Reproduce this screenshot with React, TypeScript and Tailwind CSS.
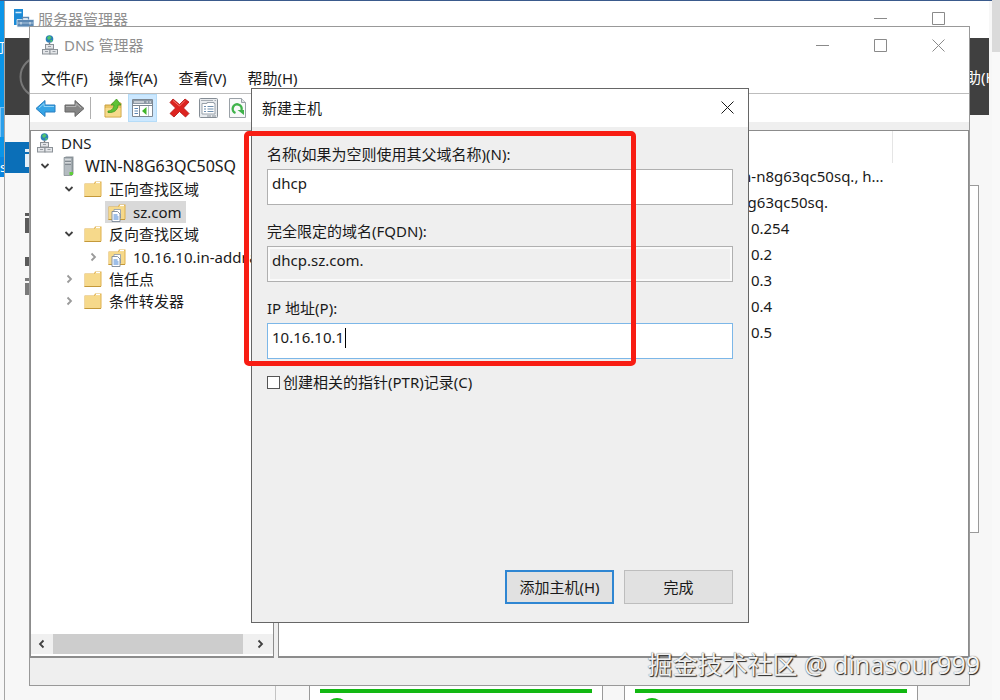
import { useState } from "react";
import type { ReactNode } from "react";
import clsx from "clsx";

const menus = ["文件(F)", "操作(A)", "查看(V)", "帮助(H)"];

const records = [
  "[2], win-n8g63qc50sq., h...",
  "win-n8g63qc50sq.",
  "10.16.10.254",
  "10.16.10.2",
  "10.16.10.3",
  "10.16.10.4",
  "10.16.10.5",
];

type IconProps = { className?: string };

function DnsIcon({ className }: IconProps) {
  return (
    <svg className={className} width="16" height="20" viewBox="0 0 16 20">
      <circle cx="7.5" cy="4" r="3.8" fill="#2b7fb8" />
      <path d="M5 2.5 7.5.6l2 1.8L8 4.4l-2 .3zM8 5.5l2-.8.6 1L9 7.4z" fill="#4fc46c" />
      <path d="M7.5 7.5V10" stroke="#777" strokeWidth="1.4" />
      <g fill="#e3e5e8" stroke="#8b9197">
        <rect x="3.5" y="9.5" width="8" height="4.5" />
        <rect x=".5" y="14.5" width="7.5" height="4.5" />
        <rect x="8" y="14.5" width="7.5" height="4.5" />
      </g>
      <path d="M6 11.5h3M3 16.5h3M10.5 16.5h3" stroke="#9aa0a6" />
    </svg>
  );
}

function ServerIcon() {
  return (
    <svg width="12" height="20" viewBox="0 0 12 20">
      <path d="M1 1.5 3 .5h7.5V18l-2 1.5H1z" fill="#8f979d" />
      <path d="M1 1.5h8v18H1z" fill="#b4bbc0" stroke="#7d868c" strokeWidth=".6" />
      <path d="M2 4h6M2 7h6" stroke="#f1f3f4" strokeWidth="1.2" />
      <path d="M2 5.2h6M2 8.2h6" stroke="#59636a" strokeWidth=".8" />
      <rect x="6.5" y="16" width="3.5" height="3" fill="#5fce3a" />
    </svg>
  );
}

function FolderIcon({ page = false }: { page?: boolean }) {
  return (
    <svg width="19" height="19" viewBox="0 0 19 19">
      <path d="M.5 3.5H10l1-2h6.5V16l-1 1H.5z" fill="#dfb04d" />
      <path d="M1 4h9.500l1-1.500h5V16H1z" fill="#f6d98b" />
      <path d="M12 2.500h4" stroke="#fff" strokeWidth="1.2" />
      <path d="M.5 16.500h16.500" stroke="#c4993a" />
      {page && (
        <>
          <path d="M6 6.5h6.5V15H6z" fill="#fff" stroke="#8a98a8" strokeWidth=".8" />
          <path d="M4 8.5h5.5L12 11v7.5H4z" fill="#fff" stroke="#7a8899" strokeWidth=".9" />
          <path d="M5.5 12h4M5.5 14h5M5.5 16h5" stroke="#3f7fd0" strokeWidth="1.1" />
        </>
      )}
    </svg>
  );
}

function Chevron({ dir, dark = false }: { dir: "down" | "right" | "left"; dark?: boolean }) {
  const d = { down: "M1.5 3 5 6.5 8.5 3", right: "M3.5 1.5 7 5 3.5 8.5", left: "M6.5 1.5 3 5l3.5 3.5" }[dir];
  return (
    <svg width="10" height="10" viewBox="0 0 10 10" fill="none">
      <path d={d} stroke={dark ? "#404040" : "#9a9a9a"} strokeWidth="1.8" />
    </svg>
  );
}

function CaptionGlyph({ kind }: { kind: "min" | "max" | "close" }) {
  const d = { min: "M0 6.5h13", max: "M.5.5h12v12H.5z", close: "M.5.5l12 12m0-12-12 12" }[kind];
  return (
    <svg width="13" height="13" viewBox="0 0 13 13" fill="none" stroke="currentColor">
      <path d={d} />
    </svg>
  );
}

function CaptionButton({ kind, label }: { kind: "min" | "max" | "close"; label: string }) {
  return (
    <button aria-label={label} className="flex w-[58px] items-center justify-center text-[#8a8a8a]">
      <CaptionGlyph kind={kind} />
    </button>
  );
}

function ArrowIcon({ back = false }: { back?: boolean }) {
  return (
    <svg width="21" height="19" viewBox="0 0 21 19">
      <path
        d={back ? "M1 9.5 10 1.5V6h10v7H10v4.5z" : "M20 9.5l-9-8V6H1v7h10v4.5z"}
        fill={back ? "#35a4e6" : "#858585"}
        stroke={back ? "#2b7fc0" : "#666"}
        strokeLinejoin="round"
      />
      <path d={back ? "M4 9l5-4.500v3h10" : "M2 7.500h10v-3L17 9"} fill="none" stroke={back ? "#8fd3f7" : "#b5b5b5"} />
    </svg>
  );
}

function UpFolderIcon() {
  return (
    <svg width="21" height="21" viewBox="0 0 21 21">
      <path d="M2 7h6l1.5-2H18v14H2z" fill="#e9c465" stroke="#c99f3e" />
      <path d="M2.5 10h15v8.5h-15z" fill="#f6da8c" />
      <path d="M5 13c3 0 5.500-2 6-6H8l5.500-6L18 7h-3c0 5-4 8-10 7.500z" fill="#5fc236" stroke="#3f9a1e" strokeWidth=".8" />
    </svg>
  );
}

function PaneIcon() {
  return (
    <svg width="21" height="18" viewBox="0 0 21 18">
      <path d="M.5.5h20v17H.5z" fill="#fff" stroke="#7c8792" />
      <path d="M1 1h19v4H1z" fill="#8d99a5" />
      <path d="M2 3h10M14.5 3H16M17.5 3H19" stroke="#fff" />
      <path d="M1 6.5h19M7.5 7v10" stroke="#7c8792" />
      <path d="M2.5 9.5H6M2.5 12H6M2.5 14.5H6" stroke="#5d87b5" strokeWidth="1.2" />
      <path d="M14.500 8v8L10 12z" fill="#41b52b" />
      <path d="M16.5 7v10" stroke="#b7c0c8" />
    </svg>
  );
}

function DeleteIcon() {
  return (
    <svg width="21" height="20" viewBox="0 0 21 20">
      <path
        d="M4 1l6.500 5.500L16 1l4 3-5.500 6 5.500 5.500-3.500 3.500-6-5.500L5 19l-4-3.500L6.500 10 1 4.500z"
        fill="#dd2420"
        stroke="#b3120f"
        strokeWidth=".8"
      />
      <path d="M4 2.500 10.500 8 16 2.500" stroke="#f47a70" fill="none" />
    </svg>
  );
}

function PropertiesIcon() {
  return (
    <svg width="19" height="20" viewBox="0 0 19 20">
      <rect x=".5" y=".5" width="18" height="19" rx="1" fill="#e8ebee" stroke="#858d95" />
      <path d="M2 2.5h12M15.5 2.5H17" stroke="#a6adb4" />
      <path d="M3 5.500h5v-1h7v1h1V16H3z" fill="#fff" stroke="#98a1aa" />
      <path d="M5 8.5h2M8.5 8.5h6M5 11h2M8.5 11h6M5 13.5h2M8.5 13.5h6" stroke="#6f8fae" />
      <path d="M8 18h4M13 18h4" stroke="#8c949c" />
    </svg>
  );
}

function RefreshIcon() {
  return (
    <svg width="17" height="20" viewBox="0 0 17 20">
      <path d="M.5.5h12l4 4v15H.5z" fill="#f8f9fa" stroke="#9aa1a7" />
      <path d="M12.5.5v4h4" fill="#dfe3e6" stroke="#9aa1a7" />
      <path d="M6.500 15A4.500 4.500 0 1 1 12.500 12" fill="none" stroke="#3fb24b" strokeWidth="2.4" />
      <path d="M8.5 12H15v5z" fill="#3fb24b" />
    </svg>
  );
}

function ServerManagerIcon() {
  return (
    <svg width="20" height="19" viewBox="0 0 20 19">
      <path d="M0 0h9v16H0z" fill="#1b8ad6" />
      <path d="M1.5 3.5h6" stroke="#d5ecfb" strokeWidth="1.5" />
      <path d="M3 10.5h17V18H3z" fill="#5c88b3" stroke="#e8f1f8" strokeWidth=".8" />
      <path d="M8.5 10.5v-2h6v2" fill="none" stroke="#5c88b3" strokeWidth="1.3" />
      <path d="M3.5 14h16" stroke="#a9c4dc" />
      <path d="M7 13v2.5M16 13v2.5" stroke="#e8f1f8" />
    </svg>
  );
}

function ToolButton({ label, active, children }: { label: string; active?: boolean; children: ReactNode }) {
  return (
    <button
      aria-label={label}
      className={clsx(
        "flex w-[29px] shrink-0 items-center justify-center",
        active && "border border-[#b5dcf8] bg-[#cce8ff]"
      )}
    >
      {children}
    </button>
  );
}

function TreeRow({
  icon,
  label,
  open,
  leaf = false,
  selected = false,
  host = false,
}: {
  icon: ReactNode;
  label: string;
  open?: boolean;
  leaf?: boolean;
  selected?: boolean;
  host?: boolean;
}) {
  return (
    <div className="flex h-[22px] items-center whitespace-nowrap">
      <span className="mr-1 flex w-4 shrink-0 justify-center">
        {!leaf && <Chevron dir={open ? "down" : "right"} dark={open} />}
      </span>
      <span className={clsx("flex h-full items-center pr-1", selected && "bg-[#d9d9d9]", host && "text-base")}>
        <span className="mr-1 flex w-6 shrink-0 justify-center">{icon}</span>
        {label}
      </span>
    </div>
  );
}

function ZoneTree() {
  return (
    <ul className="flex-1 overflow-hidden pt-px">
      <li>
        <div className="flex h-[22px] items-center pl-[2px]">
          <span className="mr-1 flex w-6 justify-center">
            <DnsIcon />
          </span>
          DNS
        </div>
        <ul className="pt-px pl-[6px]">
          <li>
            <TreeRow icon={<ServerIcon />} label="WIN-N8G63QC50SQ" open host />
            <ul className="pt-px pl-6">
              <li>
                <TreeRow icon={<FolderIcon />} label="正向查找区域" open />
                <ul className="pt-px pl-6">
                  <li>
                    <TreeRow icon={<FolderIcon page />} label="sz.com" leaf selected />
                  </li>
                </ul>
              </li>
              <li>
                <TreeRow icon={<FolderIcon />} label="反向查找区域" open />
                <ul className="pt-px pl-6">
                  <li>
                    <TreeRow icon={<FolderIcon page />} label="10.16.10.in-addr.arpa" />
                  </li>
                </ul>
              </li>
              <li>
                <TreeRow icon={<FolderIcon />} label="信任点" />
              </li>
              <li>
                <TreeRow icon={<FolderIcon />} label="条件转发器" />
              </li>
            </ul>
          </li>
        </ul>
      </li>
    </ul>
  );
}

function Tile() {
  return (
    <div className="h-20 w-[294px] shrink-0 border border-[#9a9a9a] bg-white px-[10px] pt-[28px]">
      <div className="h-1 bg-[#13b813]" />
      <div className="mt-[5px] ml-[5px] size-6 rounded-full bg-[#13b813]" />
    </div>
  );
}

function ServerManager() {
  return (
    <section className="absolute top-px right-[11px] bottom-0 left-1 flex flex-col overflow-hidden border-l border-[#a5a5a5] bg-[#f7f7f7]">
      <header className="flex h-[37px] shrink-0 bg-white pb-[2px] pl-[9px] text-[#8f8f8f]">
        <span className="mr-1 flex items-center">
          <ServerManagerIcon />
        </span>
        <h1 className="flex-1 self-center">服务器管理器</h1>
        <div className="mr-[22px] flex">
          <CaptionButton kind="min" label="最小化" />
          <CaptionButton kind="max" label="最大化" />
        </div>
      </header>
      <div className="flex h-[77px] shrink-0 items-center bg-[#404040] pl-[14px] text-white">
        <svg width="44" height="44" viewBox="0 0 44 44" fill="none" stroke="#777" strokeWidth="2">
          <circle cx="22" cy="22" r="20.5" />
        </svg>
        <span className="ml-auto w-[38px] overflow-hidden whitespace-nowrap">帮助(H)</span>
      </div>
      <div className="flex min-h-0 flex-1">
        <nav className="w-[271px] shrink-0 border-r border-[#c4c4c4] pt-[27px]">
          <div className="flex h-[31px] items-center bg-[#0b6fb8] pl-5">
            <svg width="16" height="20" viewBox="0 0 16 20" fill="#e6f1f9">
              <path d="M0 1h16v3H0zM0 6h16v13H0z" />
            </svg>
          </div>
          <svg className="mt-10 ml-5" width="16" height="82" viewBox="0 0 16 82" fill="#5a5a5a">
            <path d="M0 0h16v3H0zM0 5h16v15H0zM0 44h16v9H0z" />
            <path d="M0 65h16v3H0zM0 70h16v12H0z" fill="#7a7a7a" />
          </svg>
        </nav>
        <div className="min-w-0 flex-1 pt-[70px] pl-[33px]">
          <div className="mr-[10px] h-[348px] border border-[#9a9a9a] bg-white" />
          <div className="mt-[127px] flex gap-[21px]">
            <Tile />
            <Tile />
          </div>
        </div>
      </div>
    </section>
  );
}

function DnsManager() {
  return (
    <section className="absolute top-[26px] right-[30px] bottom-[14px] left-[29px] flex flex-col border border-[#999] bg-[#efefef]">
      <header className="flex h-[39px] shrink-0 bg-white pr-[2px] pb-[3px] pl-[12px] text-[#8f8f8f]">
        <span className="mr-[6px] flex items-center">
          <DnsIcon />
        </span>
        <h2 className="flex-1 self-center">DNS 管理器</h2>
        <CaptionButton kind="min" label="最小化" />
        <CaptionButton kind="max" label="最大化" />
        <CaptionButton kind="close" label="关闭" />
      </header>
      <nav className="flex h-7 shrink-0 items-center gap-[21px] border-b border-[#bdbdbd] bg-white pb-[3px] pl-[11px]">
        {menus.map((m) => (
          <button key={m}>{m}</button>
        ))}
      </nav>
      <div className="flex h-7 shrink-0 bg-white pl-px">
        <ToolButton label="后退">
          <ArrowIcon back />
        </ToolButton>
        <ToolButton label="前进">
          <ArrowIcon />
        </ToolButton>
        <span className="my-[3px] mr-2 ml-px w-px bg-[#b0b0b0]" />
        <ToolButton label="上一级">
          <UpFolderIcon />
        </ToolButton>
        <ToolButton label="显示/隐藏控制台树" active>
          <PaneIcon />
        </ToolButton>
        <span className="w-2" />
        <ToolButton label="删除">
          <DeleteIcon />
        </ToolButton>
        <ToolButton label="属性">
          <PropertiesIcon />
        </ToolButton>
        <ToolButton label="刷新">
          <RefreshIcon />
        </ToolButton>
      </div>
      <div className="flex min-h-0 flex-1 gap-1 pt-2">
        <aside className="flex w-[244px] shrink-0 flex-col border border-b-2 border-[#8c8c8c] bg-white">
          <ZoneTree />
          <div className="mb-[2px] flex h-5 bg-[#f0f0f0]">
            <button aria-label="向左滚动" className="flex w-[22px] items-center justify-center">
              <Chevron dir="left" dark />
            </button>
            <div className="flex-1 bg-[#cdcdcd]" />
            <button aria-label="向右滚动" className="ml-1 flex w-[26px] items-center justify-center">
              <Chevron dir="right" dark />
            </button>
          </div>
        </aside>
        <div className="min-w-0 flex-1 border border-b-2 border-[#8c8c8c] bg-white">
          <table className="w-full table-fixed border-collapse">
            <thead>
              <tr className="h-[32px]">
                <th className="w-[613px] border-r border-[#e5e5e5]" />
                <th />
              </tr>
            </thead>
            <tbody>
              {records.map((r) => (
                <tr key={r} className="h-[26px]">
                  <td className="p-0 pl-[421px] whitespace-nowrap">{r}</td>
                  <td />
                </tr>
              ))}
            </tbody>
          </table>
        </div>
      </div>
      <footer className="h-[27px] shrink-0" />
    </section>
  );
}

function NewHostDialog() {
  const [name, setName] = useState("dhcp");
  const [ip, setIp] = useState("10.16.10.1");
  const [ptr, setPtr] = useState(false);
  const field = "block h-9 w-full border px-1 pb-2 outline-none";
  const caption = "mb-[3px] block h-6 leading-6";

  return (
    <section
      role="dialog"
      aria-labelledby="new-host-title"
      className="absolute top-[88px] left-[251px] flex h-[535px] w-[498px] flex-col border border-[#666] bg-[#efefef]"
    >
      <header className="flex h-[38px] shrink-0 bg-white pb-px pl-[10px]">
        <h2 id="new-host-title" className="flex-1 self-center">
          新建主机
        </h2>
        <button aria-label="关闭" className="flex w-[42px] items-center justify-center">
          <CaptionGlyph kind="close" />
        </button>
      </header>
      <form className="flex flex-1 flex-col px-[15px] pt-[15px] pb-[18px]" onSubmit={(e) => e.preventDefault()}>
        <div className="flex flex-col gap-[14px]">
          <div>
            <label htmlFor="host" className={caption}>
              名称(如果为空则使用其父域名称)(N):
            </label>
            <input
              id="host"
              value={name}
              onChange={(e) => setName(e.target.value)}
              className={`${field} border-[#b0b0b0] bg-white`}
            />
          </div>
          <div>
            <label htmlFor="fqdn" className={caption}>
              完全限定的域名(FQDN):
            </label>
            <input
              id="fqdn"
              readOnly
              value={name + ".sz.com."}
              className={`${field} border-[#b0b0b0] bg-[#efefef] shadow-[inset_0_0_0_2px_#fafafa]`}
            />
          </div>
          <div>
            <label htmlFor="ip" className={caption}>
              IP 地址(P):
            </label>
            <div className="relative">
              <input
                id="ip"
                value={ip}
                onChange={(e) => setIp(e.target.value)}
                className={`${field} border-[#7cb7e8] bg-white`}
              />
              <span className="absolute top-[5px] left-[78px] h-5 w-px bg-black" />
            </div>
          </div>
        </div>
        <label className="mt-[11px] flex h-6 items-center gap-[3px]">
          <input
            type="checkbox"
            checked={ptr}
            onChange={(e) => setPtr(e.target.checked)}
            className="size-[13px] appearance-none border border-[#555] bg-white checked:bg-[#0078d7]"
          />
          创建相关的指针(PTR)记录(C)
        </label>
        <div className="mt-auto flex justify-end gap-[10px]">
          <button className="h-[34px] w-[109px] border-2 border-[#2f86d2] bg-[#e1e1e1]">添加主机(H)</button>
          <button type="button" className="h-[34px] w-[109px] border border-[#bdbdbd] bg-[#e1e1e1]">
            完成
          </button>
        </div>
      </form>
    </section>
  );
}

export default function App() {
  return (
    <main className="relative h-screen w-full overflow-hidden bg-[#f7f7f7] font-['Noto_Sans','Noto_Sans_CJK_SC',sans-serif] text-[15px] leading-5 text-[#1a1a1a]">
      <div className="h-px bg-[#3a5a8c]" />
      <div className="flex h-44 w-1 flex-col overflow-hidden bg-[#0b95e8] text-[13px] text-white">
        <span className="mt-[36px] -ml-2">可</span>
        <span className="mt-[50px] h-[30px] border-t border-l border-[#7cc4f5] bg-[#2b9fea]" />
        <span className="mt-5 h-5 bg-[#0a86e0] leading-5">s</span>
      </div>
      <div className="absolute top-0 right-0 bottom-0 w-2 bg-[#f9f9f9]">
        <div className="h-[52px] bg-[#dadada]" />
      </div>
      <ServerManager />
      <DnsManager />
      <NewHostDialog />
      <div className="pointer-events-none absolute top-[131px] left-[244px] h-[235px] w-[392px] rounded-[5px] border-[5px] border-[#f81d13]" />
      <p className="absolute right-5 bottom-[18px] text-[25px] leading-9 text-[#f2f2f2] [text-shadow:1px_1px_1px_#222,0_0_1px_#555]">
        掘金技术社区 @ dinasour999
      </p>
    </main>
  );
}
